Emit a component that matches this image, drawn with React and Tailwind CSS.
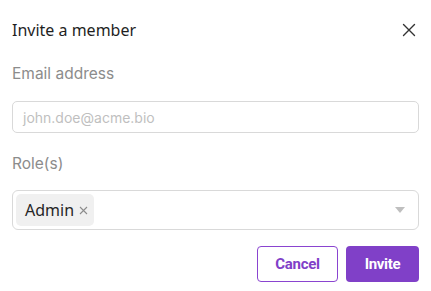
import React from "react";

export default function App() {
  return (
    <div className="w-[431px] h-[291px] bg-white px-3 pt-[18px] relative">
      <div className="flex items-center justify-between h-6">
        <div className="text-[16px] text-[#1f1f1f] font-['Noto_Sans',sans-serif] leading-6">Invite a member</div>
        <svg width="14" height="14" viewBox="0 0 14 14" className="mr-[3px]">
          <path d="M1.5 1.5 L12.5 12.5 M12.5 1.5 L1.5 12.5" stroke="#333" strokeWidth="1.4" strokeLinecap="round" />
        </svg>
      </div>
      <div className="mt-[20px] text-[15.5px] leading-6 text-[#8c8c8c] font-['Inter',sans-serif]">Email address</div>
      <div className="mt-[15px] h-[32px] border border-[#d9d9d9] rounded-[5px] flex items-center px-[10px]">
        <span className="text-[14px] text-[#bfbfbf] font-['Inter',sans-serif]">john.doe@acme.bio</span>
      </div>
      <div className="mt-[19px] text-[15.5px] leading-6 text-[#8c8c8c] font-['Inter',sans-serif]">Role(s)</div>
      <div className="mt-[14px] h-[40px] border border-[#d9d9d9] rounded-[6px] flex items-center pl-[3px] pr-[13px] justify-between">
        <div className="h-[32px] bg-[#f0f0f0] rounded-[5px] flex items-center pl-[9px] pr-[6px] gap-[5px]">
          <span className="text-[16px] text-[#262626] font-['Noto_Sans',sans-serif]">Admin</span>
          <svg width="9" height="9" viewBox="0 0 9 9">
            <path d="M1 1 L8 8 M8 1 L1 8" stroke="#8c8c8c" strokeWidth="1.1" />
          </svg>
        </div>
        <svg width="10" height="6" viewBox="0 0 10 6">
          <path d="M0 0 H10 L5 6 Z" fill="#bfbfbf" />
        </svg>
      </div>
      <div className="mt-[16px] flex justify-end gap-[8px]">
        <button className="w-[81px] h-[36px] border border-[#8a44d0] rounded-[4px] text-[#8040c8] text-[15px] font-bold tracking-[-0.3px] font-['Roboto',sans-serif]">Cancel</button>
        <button className="w-[73px] h-[36px] bg-[#8040c8] rounded-[4px] text-white text-[15px] font-bold tracking-[-0.3px] font-['Roboto',sans-serif]">Invite</button>
      </div>
    </div>
  );
}
